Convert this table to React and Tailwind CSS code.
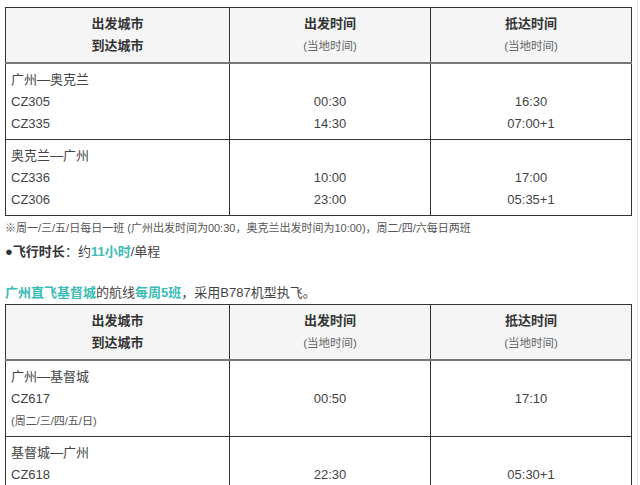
import React from "react";

const font = {
  fontFamily: '"Liberation Sans", "Noto Sans CJK SC", sans-serif',
};

const Header = () => (
  <thead>
    <tr className="bg-[#f5f5f5]">
      <th className="w-[224px] border border-[#333] border-b-2 border-b-[#777] py-[5px] text-center font-bold text-[13px] leading-[22px] text-[#333]">
        出发城市
        <br />
        到达城市
      </th>
      <th className="w-[201px] border border-[#333] border-b-2 border-b-[#777] py-[5px] text-center leading-[22px]">
        <div className="font-bold text-[13px] text-[#333]">出发时间</div>
        <div className="font-normal text-[11.5px] text-[#666]">(当地时间)</div>
      </th>
      <th className="border border-[#333] border-b-2 border-b-[#777] py-[5px] text-center leading-[22px]">
        <div className="font-bold text-[13px] text-[#333]">抵达时间</div>
        <div className="font-normal text-[11.5px] text-[#666]">(当地时间)</div>
      </th>
    </tr>
  </thead>
);

const Row = ({ route, codes, dep, arr, note }) => (
  <tr className="text-[13px] leading-[22px] text-[#444]">
    <td className="border border-[#333] px-[5px] py-[4.5px] align-top">
      <div>{route}</div>
      {codes.map((c) => (
        <div key={c}>{c}</div>
      ))}
      {note && <div className="text-[11px] text-[#555]">{note}</div>}
    </td>
    <td className="border border-[#333] py-[4.5px] text-center align-top">
      <div>&nbsp;</div>
      {dep.map((t) => (
        <div key={t}>{t}</div>
      ))}
      {note && <div>&nbsp;</div>}
    </td>
    <td className="border border-[#333] py-[4.5px] text-center align-top">
      <div>&nbsp;</div>
      {arr.map((t) => (
        <div key={t}>{t}</div>
      ))}
      {note && <div>&nbsp;</div>}
    </td>
  </tr>
);

const App = () => {
  return (
    <div
      className="w-[638px] h-[485px] overflow-hidden bg-white border-r border-[#e3e3e3]"
      style={font}
    >
      <div className="pl-[5px] pt-[7px] w-[633px]">
        <table className="w-[627px] border-collapse table-fixed">
          <Header />
          <tbody>
            <Row
              route="广州—奥克兰"
              codes={["CZ305", "CZ335"]}
              dep={["00:30", "14:30"]}
              arr={["16:30", "07:00+1"]}
            />
            <Row
              route="奥克兰—广州"
              codes={["CZ336", "CZ306"]}
              dep={["10:00", "23:00"]}
              arr={["17:00", "05:35+1"]}
            />
          </tbody>
        </table>
        <p className="mt-[2px] text-[11px] leading-[20px] text-[#555]">
          ※周一/三/五/日每日一班 (广州出发时间为00:30，奥克兰出发时间为10:00)，周二/四/六每日两班
        </p>
        <p className="mt-[3px] text-[13px] leading-[22px] text-[#444]">
          <span className="text-[#333]">●</span>
          <span className="font-bold text-[#333]">飞行时长</span>：约
          <span className="font-bold text-[#3bbcb6]">11小时</span>/单程
        </p>
        <p className="mt-[21px] mb-[2px] text-[13px] leading-[18px] text-[#444]">
          <span className="font-bold text-[#3bbcb6]">广州直飞基督城</span>的航线
          <span className="font-bold text-[#3bbcb6]">每周5班</span>，采用B787机型执飞。
        </p>
        <table className="w-[627px] border-collapse table-fixed">
          <Header />
          <tbody>
            <Row
              route="广州—基督城"
              codes={["CZ617"]}
              dep={["00:50"]}
              arr={["17:10"]}
              note="(周二/三/四/五/日)"
            />
            <Row
              route="基督城—广州"
              codes={["CZ618"]}
              dep={["22:30"]}
              arr={["05:30+1"]}
            />
          </tbody>
        </table>
      </div>
    </div>
  );
};

export default App;
